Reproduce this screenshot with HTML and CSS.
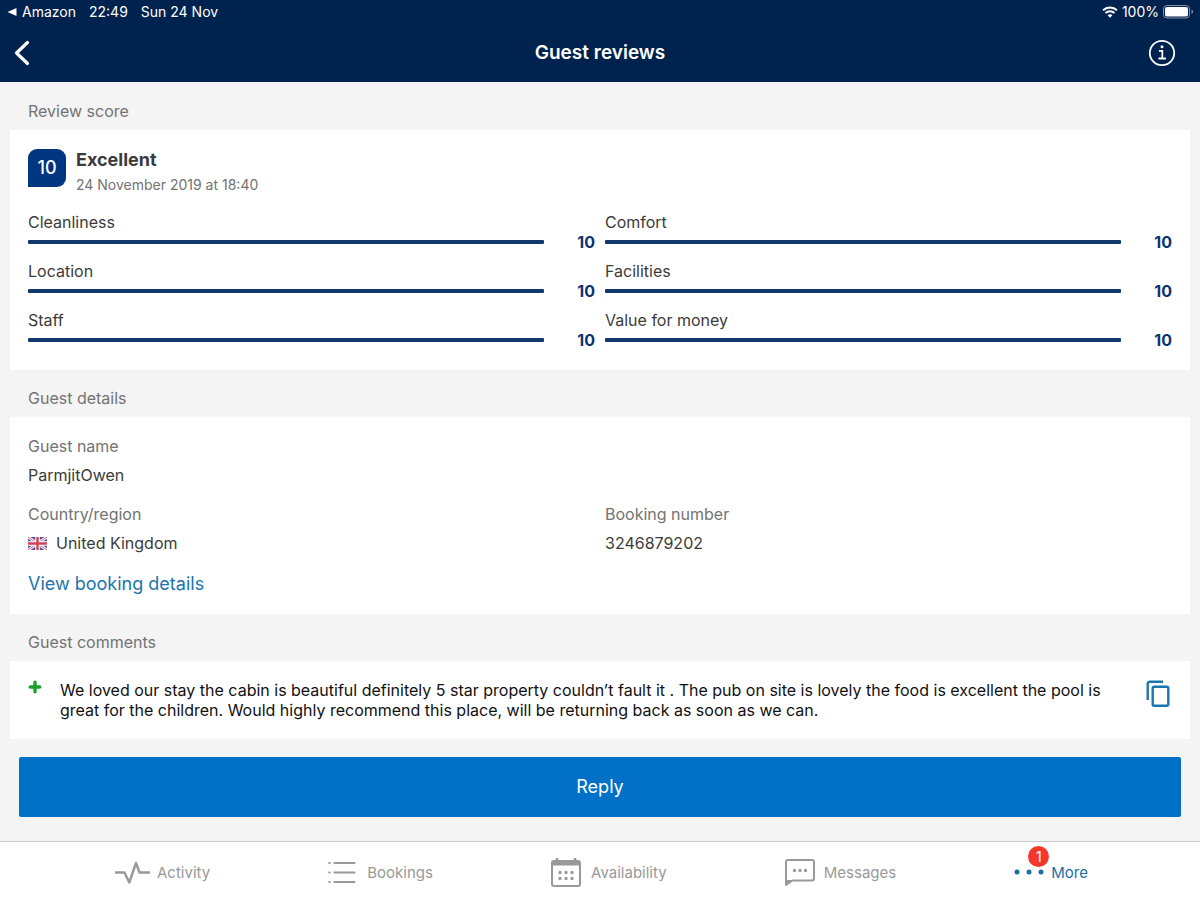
FILE: index.html
```html
<!DOCTYPE html>
<html lang="en">
<head>
<meta charset="utf-8">
<meta name="viewport" content="width=device-width, initial-scale=1">
<title>Guest reviews</title>
<link rel="stylesheet" href="styles.css">
</head>
<body>
<header class="header">
  <div class="status">
    <div class="status-group">
      <a class="status-app" href="#amazon"><svg width="10" height="10" viewBox="0 0 10 10" aria-hidden="true"><path d="M9.500 1v8L.5 5z" fill="currentColor"/></svg>Amazon</a>
      <span>22:49</span>
      <span>Sun 24 Nov</span>
    </div>
    <div class="status-group status-right">
      <svg width="16" height="12" viewBox="0 0 16 12" fill="none" stroke="currentColor" stroke-width="2" aria-hidden="true"><path d="M1 4.300a10.200 10.200 0 0 1 14 0M3.500 7a6.600 6.600 0 0 1 9 0"/><path d="M8 11.700 5.600 9.300a3.600 3.600 0 0 1 4.800 0z" fill="currentColor" stroke="none"/></svg>
      <span>100%</span>
      <svg width="31" height="14" viewBox="0 0 31 14" aria-hidden="true"><rect x=".5" y=".5" width="26" height="12.500" rx="3.500" fill="none" stroke="#8692a8"/><rect x="2" y="2" width="23" height="9.500" rx="2" fill="currentColor"/><path d="M28.500 4.500c2 .8 2 3.700 0 4.500z" fill="#8692a8"/></svg>
    </div>
  </div>
  <div class="nav">
    <button class="icon-button" type="button" aria-label="Back"><svg width="16" height="26" viewBox="0 0 16 26" fill="none" stroke="currentColor" stroke-width="3.200" stroke-linecap="round" stroke-linejoin="round"><path d="M13.500 2.500 2.500 13l11 10.500"/></svg></button>
    <h1 class="title">Guest reviews</h1>
    <button class="icon-button info" type="button" aria-label="Information"><svg width="28" height="28" viewBox="0 0 28 28" fill="none" stroke="currentColor" stroke-width="1.800"><circle cx="14" cy="14" r="12.200"/><path d="M11 11.800h3.300v7.500M10.500 19.500h7.500"/><circle cx="14" cy="7.700" r="1.500" fill="currentColor" stroke="none"/></svg></button>
  </div>
</header>

<main class="content">
  <h2 class="section-title">Review score</h2>
  <section class="card score-card">
    <div class="summary">
      <span class="badge">10</span>
      <div>
        <h3 class="rating">Excellent</h3>
        <p class="date">24 November 2019 at 18:40</p>
      </div>
    </div>
    <dl class="scores">
      <div class="score"><dt>Cleanliness</dt><dd><span class="bar"></span><span class="value">10</span></dd></div>
      <div class="score"><dt>Comfort</dt><dd><span class="bar"></span><span class="value">10</span></dd></div>
      <div class="score"><dt>Location</dt><dd><span class="bar"></span><span class="value">10</span></dd></div>
      <div class="score"><dt>Facilities</dt><dd><span class="bar"></span><span class="value">10</span></dd></div>
      <div class="score"><dt>Staff</dt><dd><span class="bar"></span><span class="value">10</span></dd></div>
      <div class="score"><dt>Value for money</dt><dd><span class="bar"></span><span class="value">10</span></dd></div>
    </dl>
  </section>

  <h2 class="section-title">Guest details</h2>
  <section class="card details-card">
    <dl class="details">
      <div class="detail detail-wide"><dt>Guest name</dt><dd>ParmjitOwen</dd></div>
      <div class="detail"><dt>Country/region</dt><dd><svg width="19" height="13" viewBox="0 0 19 13" aria-hidden="true"><path fill="#4c5596" d="M0 0h19v13H0z"/><path d="m0 0 19 13M19 0 0 13" stroke="#f3eef5" stroke-width="3"/><path d="m0 0 19 13M19 0 0 13" stroke="#d07a8c" stroke-width="1"/><path d="M9.500 0v13M0 6.500h19" stroke="#fff" stroke-width="4.500"/><path d="M9.500 0v13M0 6.500h19" stroke="#d34257" stroke-width="2.400"/></svg>United Kingdom</dd></div>
      <div class="detail"><dt>Booking number</dt><dd>3246879202</dd></div>
    </dl>
    <a class="link" href="#booking">View booking details</a>
  </section>

  <h2 class="section-title">Guest comments</h2>
  <section class="card comment-card">
    <svg class="plus" width="14" height="14" viewBox="0 0 14 14" stroke="#18a328" stroke-width="3.400" stroke-linecap="round" aria-hidden="true"><path d="M7 2.200v9.600M2.200 7h9.600"/></svg>
    <p class="comment">We loved our stay the cabin is beautiful definitely 5 star property couldn’t fault it . The pub on site is lovely the food is excellent the pool is great for the children. Would highly recommend this place, will be returning back as soon as we can.</p>
    <button class="icon-button copy" type="button" aria-label="Copy comment"><svg width="24" height="28" viewBox="0 0 24 28" fill="none" stroke="currentColor" stroke-width="2.400" stroke-linejoin="round"><path d="M1.700 20V3.700a2 2 0 0 1 2-2H17"/><rect x="6.700" y="6.700" width="15.600" height="19" rx="1.500"/></svg></button>
  </section>
  <button class="reply" type="button">Reply</button>
</main>

<nav class="tabs" aria-label="Main">
  <a class="tab" href="#activity"><svg width="35" height="26" viewBox="0 0 35 26" fill="none" stroke="currentColor" stroke-width="2.400" stroke-linejoin="round"><path d="M0 12.500h9.500l4.800 10L21 3l3.500 9.500H35"/></svg>Activity</a>
  <a class="tab tab-bookings" href="#bookings"><svg width="28" height="26" viewBox="0 0 28 26" fill="none" stroke="currentColor" stroke-width="2.200" stroke-linecap="round"><path d="M6.500 3h20M6.500 12.500h20M6.500 22h20M1.300 3h.4M1.300 12.500h.4M1.300 22h.4"/></svg>Bookings</a>
  <a class="tab tab-availability" href="#availability"><svg width="30" height="30" viewBox="0 0 30 30" fill="none" stroke="currentColor" stroke-width="2"><rect x="1" y="3" width="28" height="25" rx="2"/><path d="M2 5.500h26" stroke-width="4"/><path d="M6 0v4M24 0v4" stroke-width="2.600"/><path d="M9 14.500h0M15 14.500h0M21 14.500h0M9 20.500h0M15 20.500h0M21 20.500h0" stroke-width="3.400" stroke-linecap="round"/></svg>Availability</a>
  <a class="tab tab-messages" href="#messages"><svg width="30" height="28" viewBox="0 0 30 28" fill="none" stroke="currentColor" stroke-width="2"><path d="M1 26V3a2 2 0 0 1 2-2h24a2 2 0 0 1 2 2v16.500a2 2 0 0 1-2 2H7.500z" stroke-linejoin="round"/><path d="M1 26v-5h7z" fill="currentColor" stroke="none"/><path d="M9.500 11.500h0M15 11.500h0M20.500 11.500h0" stroke-width="3.400" stroke-linecap="round"/></svg>Messages</a>
  <a class="tab tab-more" href="#more" aria-current="page"><span class="dots"><svg width="30" height="8" viewBox="0 0 30 8" fill="currentColor"><circle cx="3" cy="3" r="2.500"/><circle cx="15" cy="3" r="2.500"/><circle cx="27" cy="3" r="2.500"/></svg><span class="count">1</span></span>More</a>
</nav>
</body>
</html>
```
FILE: styles.css
```css
* { box-sizing: border-box; }
body {
  margin: 0;
  min-height: 100vh;
  display: flex;
  flex-direction: column;
  background: #f4f4f4;
  color: #3b3b3b;
  font: 16px/20px Inter, "Liberation Sans", sans-serif;
}
h1, h2, h3, p, dl, dd { margin: 0; }
button { font: inherit; border: 0; padding: 0; }
a { color: inherit; text-decoration: none; }
svg { flex: none; display: block; }

.header { background: #00224f; color: #fff; }
.status {
  display: flex;
  justify-content: space-between;
  height: 24px;
  padding: 0 6px 0 7px;
  font-size: 14px;
}
.status-group { display: flex; align-items: center; gap: 13px; }
.status-right { gap: 4px; }
.status-app { display: flex; align-items: center; gap: 5px; }
.nav {
  display: grid;
  grid-template-columns: 1fr auto 1fr;
  align-items: center;
  height: 58px;
  padding: 0 14px;
}
.icon-button { justify-self: start; background: none; color: inherit; cursor: pointer; }
.info { justify-self: end; margin-right: 10px; }
.title { font-size: 19px; font-weight: 600; line-height: 24px; }

.content { flex: 1; padding: 1px 10px 24px; }
.section-title {
  padding: 18px 18px 9px;
  color: #737373;
  font-size: 16px;
  font-weight: 400;
}
.card { background: #fff; padding: 18px; }
.score-card { padding-bottom: 20px; }
.summary { display: flex; gap: 10px; }
.badge {
  width: 38px;
  height: 38px;
  margin-top: 1px;
  border-radius: 9px 9px 9px 0;
  background: #003580;
  color: #fff;
  font-size: 18px;
  font-weight: 500;
  line-height: 38px;
  text-align: center;
}
.rating { font-size: 18px; font-weight: 700; line-height: 24px; }
.date { margin-top: 3px; color: #737373; font-size: 14px; }
.scores {
  display: grid;
  grid-template-columns: 1fr 1fr;
  gap: 9px 10px;
  margin-top: 17px;
}
.score dd { display: flex; align-items: center; }
.bar { flex: 1; height: 4px; border-radius: 1px; background: #12376c; }
.value {
  width: 51px;
  color: #0c3270;
  font-weight: 700;
  text-align: right;
}

.details-card { padding: 19px 18px 18px; }
.details {
  display: grid;
  grid-template-columns: 1fr 1fr;
  gap: 19px 10px;
}
.detail-wide { grid-column: 1 / -1; }
.detail dt { color: #737373; }
.detail dd { display: flex; align-items: center; gap: 9px; margin-top: 9px; }
.link {
  display: block;
  width: fit-content;
  margin-top: 19px;
  color: #1a75b0;
  font-size: 18px;
  line-height: 24px;
}

.comment-card { display: flex; align-items: flex-start; padding: 19px 20px 19px 18px; color: #111; }
.plus { margin-right: 18px; }
.comment { flex: 1; }
.copy { margin-left: 38px; color: #1a75b0; }
.reply {
  display: block;
  width: calc(100% - 18px);
  height: 60px;
  margin: 18px 9px 0;
  border-radius: 2px;
  background: #0071c6;
  color: #fff;
  font-size: 18px;
  cursor: pointer;
}

.tabs {
  display: flex;
  justify-content: space-between;
  height: 59px;
  padding: 3px 112px 0 115px;
  border-top: 1px solid #cacaca;
  background: #fff;
  color: #999;
  font-size: 15px;
}
.tab { display: flex; align-items: center; gap: 7px; }
.tab-bookings { gap: 11px; }
.tab-availability { gap: 10px; }
.tab-messages { gap: 9px; }
.tab-more { color: #1a6fa5; }
.dots { position: relative; }
.count {
  position: absolute;
  right: -5px;
  bottom: 10px;
  width: 21px;
  height: 21px;
  border-radius: 50%;
  background: #f5382f;
  color: #fff;
  font-size: 14px;
  line-height: 21px;
  text-align: center;
}
```
